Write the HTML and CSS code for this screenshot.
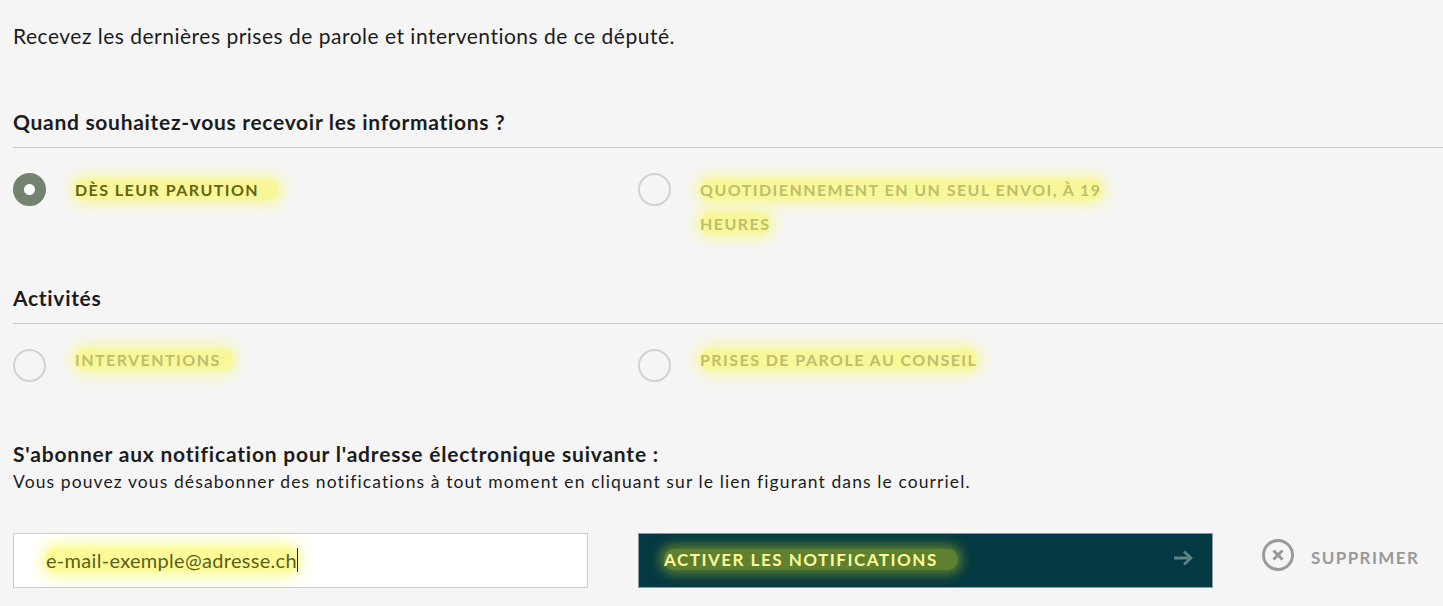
FILE: index.html
```html
<!DOCTYPE html>
<html lang="fr">
<head>
    <meta charset="UTF-8">
    <title>Notifications</title>
    <link rel="stylesheet" href="styles.css">
</head>
<body>
<p class="intro">Recevez les dernières prises de parole et interventions de ce député.</p>

<h2 class="section-title first">Quand souhaitez-vous recevoir les informations ?</h2>
<div class="options">
    <div class="option">
        <span class="radio checked"></span>
        <span class="label"><span class="mark long">DÈS LEUR PARUTION</span></span>
    </div>
    <div class="option off">
        <span class="radio"></span>
        <span class="label narrow"><span class="mark">QUOTIDIENNEMENT EN UN SEUL ENVOI, À 19 HEURES</span></span>
    </div>
</div>

<h2 class="section-title second">Activités</h2>
<div class="options raised">
    <div class="option off">
        <span class="radio"></span>
        <span class="label"><span class="mark long-small">INTERVENTIONS</span></span>
    </div>
    <div class="option off">
        <span class="radio"></span>
        <span class="label"><span class="mark">PRISES DE PAROLE AU CONSEIL</span></span>
    </div>
</div>

<h3 class="sub-title">S'abonner aux notification pour l'adresse électronique suivante :</h3>
<p class="sub-text">Vous pouvez vous désabonner des notifications à tout moment en cliquant sur le lien figurant dans le courriel.</p>

<div class="form-row">
    <div class="email"><span class="email-mark">e-mail-exemple@adresse.ch</span><span class="caret"></span></div>
    <div class="submit">
        <span class="submit-mark">ACTIVER LES NOTIFICATIONS</span>
        <svg class="arrow" width="20" height="16" viewBox="0 0 20 16"><path d="M1 8H18M11 1.5L18 8L11 14.5" fill="none" stroke="#5f8284" stroke-width="2.8"/></svg>
    </div>
    <div class="delete">
        <svg width="32" height="32" viewBox="0 0 32 32"><circle cx="16" cy="16" r="14.5" fill="none" stroke="#999" stroke-width="3"/><path d="M11.5 11.5L20.5 20.5M20.5 11.5L11.5 20.5" fill="none" stroke="#999" stroke-width="3"/></svg>
        <span class="delete-text">SUPPRIMER</span>
    </div>
</div>
</body>
</html>
```

FILE: styles.css
```css
html,body,h2,h3,p{margin:0;padding:0;}
body{width:1443px;height:606px;overflow:hidden;background:#f5f5f5;color:#1c1c1c;font-family:"Lato","Liberation Sans",sans-serif;}

.intro{margin:23px 0 0 13px;font-size:21px;line-height:26px;letter-spacing:.5px;}

.section-title{margin-left:13px;padding-bottom:12px;border-bottom:1px solid #ccc;font-size:21px;line-height:26px;font-weight:700;letter-spacing:.7px;}
.section-title.first{margin-top:60px;}
.section-title.second{margin-top:44px;}

.options{display:flex;padding:25px 0 0 0;margin-left:13px;}
.option{display:flex;width:625px;flex:none;}
.radio{width:33px;height:33px;flex:none;box-sizing:border-box;border:2px solid #d2d2d2;border-radius:50%;}
.radio.checked{border:11px solid #748270;background:#fff;}
.label{margin-left:29px;font-size:16px;line-height:34px;font-weight:700;letter-spacing:1.45px;color:#66660f;}
.label.narrow{width:430px;}
.raised .label{margin-top:-6px;}
.off .label{color:#bcbf6c;}
.mark{padding:1px 0;background:#f8f89a;border-radius:10px;box-shadow:0 0 14px 4px #f8f89a;-webkit-box-decoration-break:clone;box-decoration-break:clone;}
.mark.long{padding-right:20px;}
.mark.long-small{padding-right:12px;}

.sub-title{margin:59px 0 0 13px;font-size:21px;line-height:26px;font-weight:700;letter-spacing:.8px;}
.sub-text{margin:3px 0 0 13px;font-size:17.5px;line-height:24px;letter-spacing:1.1px;}

.form-row{display:flex;align-items:flex-start;margin:39px 0 0 13px;}
.email{display:flex;align-items:center;width:575px;height:55px;box-sizing:border-box;border:1px solid #ccc;background:#fff;padding:0 0 0 32px;font-size:20px;letter-spacing:.3px;color:#5f5f16;}
.email-mark{margin-top:-2px;background:#fbfb9a;border-radius:10px;box-shadow:0 0 14px 5px #fbfb9a;}
.caret{width:1px;height:24px;margin-top:-2px;background:#222;}

.submit{display:flex;align-items:center;justify-content:space-between;width:575px;height:55px;box-sizing:border-box;margin-left:50px;border:1px solid #8d9a9d;background:#043842;padding:0 19px 0 25px;font-size:17px;font-weight:700;letter-spacing:1.5px;color:#fbfb9a;}
.submit-mark{margin-top:-3px;padding-right:20px;background:#5f8030;border-radius:10px;box-shadow:0 0 12px 4px #5f8030;}
.arrow{margin-top:-5px;}

.delete{display:flex;align-items:center;margin:6px 0 0 49px;color:#999;}
.delete-text{margin:4px 0 0 17px;font-size:17px;font-weight:700;letter-spacing:1.4px;}
```
